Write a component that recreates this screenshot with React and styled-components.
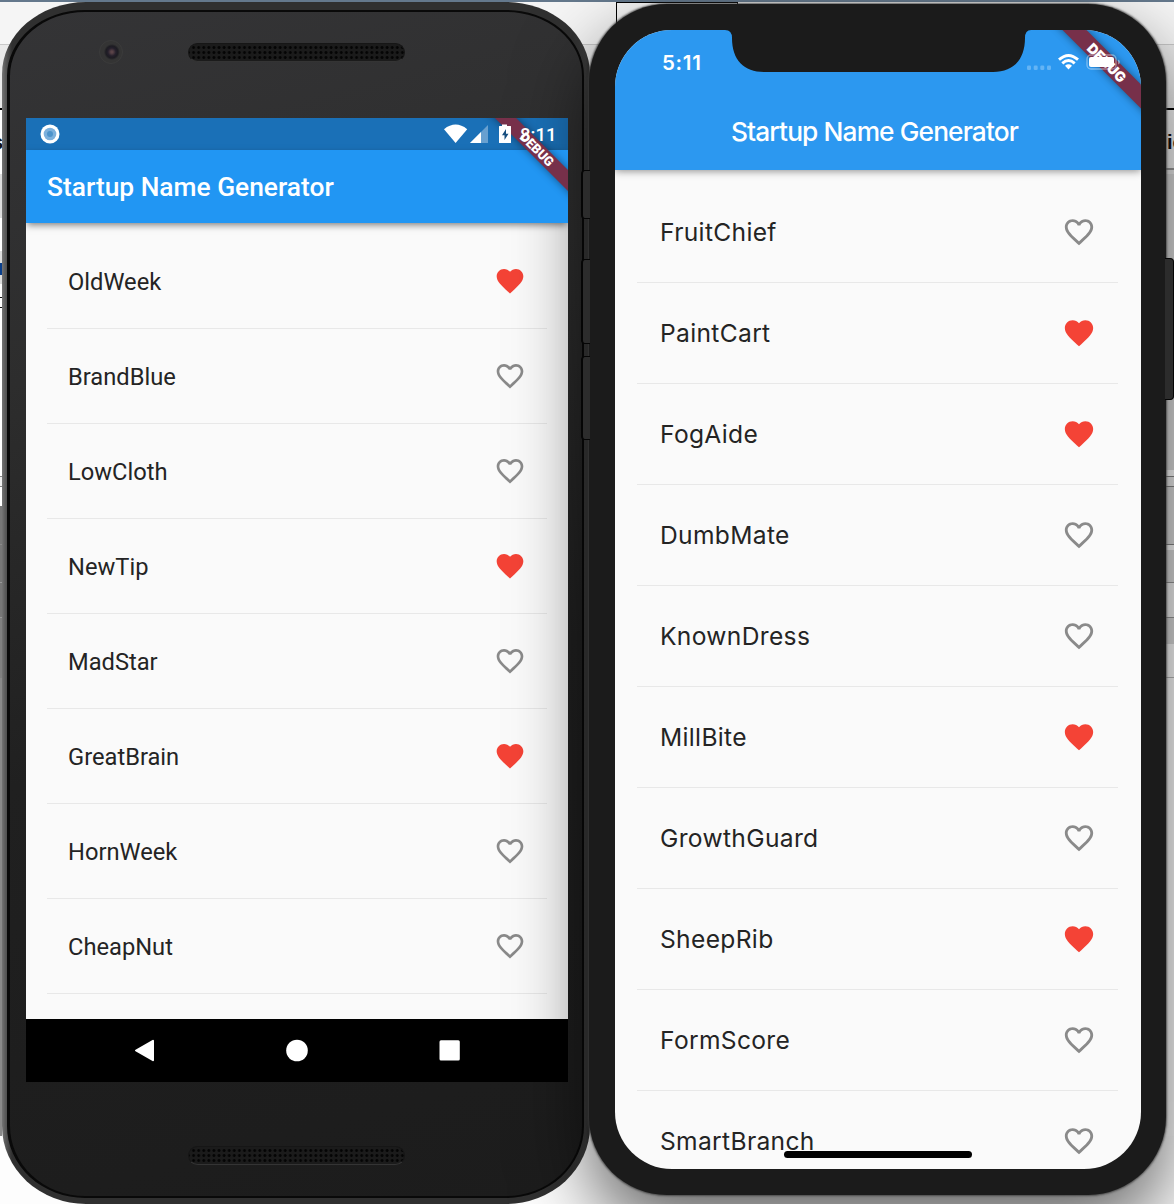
import React from "react";
import styled, { createGlobalStyle } from "styled-components";

const Global = createGlobalStyle`
  * { box-sizing: border-box; }
  body { margin: 0; overflow: hidden; background: #fff; }
`;

const Desktop = styled.div`
  position: relative;
  width: 1174px;
  height: 1204px;
  overflow: hidden;
  background: #fdfdfd;
`;

const Backdrop = styled.div`
  position: absolute;
  inset: 0;
  display: flex;
  flex-direction: column;
`;

const Strip = styled.div`
  flex: none;
  display: flex;
  justify-content: space-between;
  align-items: center;
  height: ${(p) => p.$h}px;
  background: ${(p) => (p.$edge ? `linear-gradient(90deg, ${p.$edge} 2px, ${p.$c} 2px)` : p.$c)};
`;

const WindowTab = styled.div`
  position: absolute;
  left: 616px;
  top: 2px;
  width: 122px;
  height: 42px;
  border: 1px solid #000;
`;

const Clipped = styled.span`
  width: 7px;
  overflow: hidden;
  display: flex;
  justify-content: ${(p) => (p.$end ? "flex-end" : "flex-start")};
  font: 700 20px "Liberation Sans", sans-serif;
  color: #111;
  padding-top: 6px;
  margin-left: ${(p) => (p.$end ? "-4px" : "0")};
`;

const Devices = styled.main`
  position: relative;
  display: flex;
  align-items: flex-start;
`;

/* Android handset */
const Nexus = styled.section`
  flex: none;
  width: 588px;
  height: 1202px;
  margin: 2px 0 0 2px;
  padding: 8px 6px 6px 5px;
  border-radius: 84px 84px 84px 84px / 72px 72px 78px 78px;
  background: linear-gradient(90deg, #747474 0, #5c5c5c 3px, #4a4a4a 6px, #303030 10px, #303030 570px, #3a3a3a 584px, #2c2c2c 588px);
`;

const NexusFace = styled.div`
  height: 100%;
  display: flex;
  flex-direction: column;
  align-items: center;
  border-radius: 78px 78px 78px 78px / 66px 66px 72px 72px;
  border: 2px solid #090909;
  border-left-width: 3px;
  background: linear-gradient(165deg, #343436 0%, #2d2d2d 28%, #202020 58%, #1c1c1c 100%);
`;

const NexusTop = styled.div`
  align-self: stretch;
  height: 106px;
  flex: none;
  display: flex;
  align-items: flex-start;
  padding: 27px 0 0 89px;
  gap: 65px;
`;

const Lens = styled.div`
  width: 24px;
  height: 24px;
  margin-top: 1px;
  border-radius: 50%;
  border: 1px solid #3b3b3b;
  background: radial-gradient(circle at 54% 50%, #5a4348 0 1px, #241f2b 4px, #1d1c22 6px, #343434 8px);
`;

const Grille = styled.div`
  width: 217px;
  height: 19px;
  margin-top: ${(p) => p.$mt}px;
  margin-left: ${(p) => p.$ml || 0}px;
  flex: none;
  border-radius: 10px;
  border: 1px solid #161616;
  border-bottom-color: #343434;
  background: radial-gradient(circle, #040404 0 1px, transparent 1.8px) 2px 1px / 5.1px 5px, #1b1b1b;
`;

const NexusScreen = styled.div`
  position: relative;
  flex: none;
  width: 542px;
  height: 964px;
  margin-left: 2px;
  overflow: hidden;
  display: flex;
  flex-direction: column;
  background: #fafafa;
  font-family: Roboto, sans-serif;
`;

const NexusStatus = styled.div`
  height: 32px;
  flex: none;
  display: flex;
  align-items: center;
  padding: 0 11px 0 14px;
  background: #1a70b7;
  color: #fff;
  font-size: 18.5px;
  font-weight: 500;
`;

const Signals = styled.svg`
  margin-left: auto;
  position: relative;
  z-index: 3;
`;

const NexusClock = styled.span`
  width: 37px;
  margin-left: 8px;
  position: relative;
  z-index: 3;
  padding-top: 1px;
  white-space: nowrap;
`;

const AppBar = styled.header`
  position: relative;
  z-index: 1;
  flex: none;
  display: flex;
  align-items: center;
  color: #fff;
  font-weight: 500;
  box-shadow: 0 1px 8px rgba(0, 0, 0, 0.45);
`;

const NexusBar = styled(AppBar)`
  height: 73px;
  padding-left: 21px;
  background: #2196f3;
  font-size: 26.35px;
  box-shadow: 0 3px 7px -1px rgba(0, 0, 0, 0.5);
`;

const List = styled.ul`
  flex: 1;
  min-height: 0;
  overflow: hidden;
  margin: 0;
  padding: ${(p) => p.$pad};
  list-style: none;
  color: #242424;
`;

const Row = styled.li`
  display: flex;
  align-items: center;
  justify-content: space-between;
  height: ${(p) => p.$h}px;
  padding: ${(p) => p.$pad};
  border-bottom: 1px solid #e8e8e8;
  font-size: ${(p) => p.$size}px;
  letter-spacing: ${(p) => p.$track || 0}px;
`;

const Name = styled.span`
  padding-top: ${(p) => p.$drop || 0}px;
`;

const NavBar = styled.nav`
  flex: none;
  height: 63px;
  display: flex;
  align-items: center;
  justify-content: center;
  background: #000;
`;

const Ribbon = styled.div`
  position: absolute;
  z-index: 2;
  top: ${(p) => p.$top}px;
  right: ${(p) => p.$right}px;
  width: 180px;
  height: ${(p) => p.$h}px;
  transform: rotate(45deg);
  display: flex;
  align-items: center;
  justify-content: center;
  background: #77304a;
  color: #fff;
  font-size: ${(p) => p.$size}px;
  font-weight: 900;
  box-shadow: 0 0 8px rgba(0, 0, 0, 0.45);
`;

const SideButton = styled.div`
  position: absolute;
  left: ${(p) => p.$x}px;
  top: ${(p) => p.$y}px;
  width: 9px;
  height: ${(p) => p.$h}px;
  border: 1px solid #050505;
  border-left-width: ${(p) => (p.$right ? 0 : 2)}px;
  border-right-width: ${(p) => (p.$right ? 1 : 0)}px;
  border-radius: ${(p) => (p.$right ? "0 4px 4px 0" : "4px 0 0 4px")};
  background: #2c2c2c;
`;

/* iPhone handset */
const IPhone = styled.section`
  position: relative;
  flex: none;
  width: 577px;
  height: 1191px;
  margin: 4px 0 0 -1px;
  padding: 26px 25px 26px 26px;
  border-radius: 78px;
  background: #1b1b1b;
  box-shadow: 0 0 2px 1px rgba(60, 60, 60, 0.8), 0 34px 74px rgba(0, 0, 0, 0.6);
`;

const IScreen = styled.div`
  position: relative;
  width: 526px;
  height: 1139px;
  border-radius: 57px;
  overflow: hidden;
  display: flex;
  flex-direction: column;
  background: #fafafa;
  font-family: Inter, sans-serif;
`;

const IHeader = styled(AppBar)`
  height: 140px;
  flex-direction: column;
  background: #2c98f0;
`;

const IStatus = styled.div`
  align-self: stretch;
  display: flex;
  align-items: center;
  justify-content: space-between;
  height: 62px;
  padding: 3px 20px 0 47px;
  font-size: 20.5px;
  font-weight: 600;
  letter-spacing: 0.7px;
`;

const ITitle = styled.div`
  height: 78px;
  display: flex;
  align-items: center;
  padding-right: 7px;
  font-size: 26.3px;
  letter-spacing: -0.88px;
`;

const Overlay = styled.svg`
  position: absolute;
  z-index: 3;
  left: ${(p) => p.$x}px;
  top: ${(p) => p.$y}px;
`;

const HomeBar = styled.div`
  position: absolute;
  z-index: 3;
  left: 169px;
  bottom: 11px;
  width: 188px;
  height: 7px;
  border-radius: 4px;
  background: #000;
`;

const FILLED =
  "M12 21.35l-1.45-1.32C5.4 15.36 2 12.28 2 8.5 2 5.42 4.42 3 7.5 3c1.74 0 3.41.81 4.5 2.09C13.09 3.81 14.76 3 16.5 3 19.58 3 22 5.42 22 8.5c0 3.78-3.4 6.86-8.55 11.54L12 21.35z";
const OUTLINE =
  "M16.5 3c-1.74 0-3.41.81-4.5 2.09C10.91 3.81 9.24 3 7.5 3 4.42 3 2 5.42 2 8.5c0 3.78 3.4 6.86 8.55 11.54L12 21.35l1.45-1.32C18.6 15.36 22 12.28 22 8.5 22 5.42 19.58 3 16.5 3zm-4.4 15.55l-.1.1-.1-.1C7.14 14.24 4 11.39 4 8.5 4 6.5 5.5 5 7.5 5c1.54 0 3.04.99 3.57 2.36h1.87C13.46 5.99 14.96 5 16.5 5c2 0 3.5 1.5 3.5 3.5 0 2.89-3.14 5.74-7.9 10.05z";

function Heart({ on, size }) {
  return (
    <svg width={size} height={size} viewBox="0 0 24 24">
      <path d={on ? FILLED : OUTLINE} fill={on ? "#f44336" : "#8a8a8a"} />
    </svg>
  );
}

const androidNames = [
  ["OldWeek", true],
  ["BrandBlue", false],
  ["LowCloth", false],
  ["NewTip", true],
  ["MadStar", false],
  ["GreatBrain", true],
  ["HornWeek", false],
  ["CheapNut", false],
];

const iosNames = [
  ["FruitChief", false],
  ["PaintCart", true],
  ["FogAide", true],
  ["DumbMate", false],
  ["KnownDress", false],
  ["MillBite", true],
  ["GrowthGuard", false],
  ["SheepRib", true],
  ["FormScore", false],
  ["SmartBranch", false],
];

/* height, colour, left edge colour */
const strips = [
  [2, "#64788c"],
  [42, "#f5f5f5"],
  [1, "#c8c8c8"],
  [63, "#e9e9e9"],
  [2, "#000"],
  [58, "#f4f4f4", "#fff"],
  [2, "#999", "#fff"],
  [4, "#eee", "#fff"],
  [44, "#ddd"],
  [33, "#ddd", "#fff"],
  [12, "#ddd"],
  [12, "#ddd", "#0a3f8c"],
  [9, "#ddd"],
  [13, "#ddd", "#fff"],
  [1, "#ddd", "#111"],
  [9, "#ddd", "#fff"],
  [1, "#ddd", "#111"],
  [162, "#ddd", "#fff"],
  [6, "#fff"],
  [1, "#888"],
  [9, "#eee"],
  [1, "#888"],
  [19, "#ddd", "#fff"],
  [38, "#ddd", "#777"],
  [1, "#888"],
  [5, "#fff", "#777"],
  [32, "#ddd", "#777"],
  [1, "#999"],
  [34, "#f5f5f5", "#777"],
  [1, "#999"],
  [26, "#ddd", "#808080"],
  [33, "#fff", "#808080"],
  [1, "#bbb", "#808080"],
  [458, "#fff", "#8a8a8a"],
];

function Android() {
  return (
    <Nexus>
      <NexusFace>
        <NexusTop>
          <Lens />
          <Grille $mt={4} />
        </NexusTop>
        <NexusScreen>
          <NexusStatus>
            <svg width="20" height="20" viewBox="0 0 20 20">
              <circle cx="10" cy="10" r="9.5" fill="#fff" />
              <circle cx="10" cy="10" r="6.3" fill="#7cb0dc" />
              <circle cx="10" cy="10" r="3" fill="#4c93cb" />
            </svg>
            <Signals width="68" height="20" viewBox="0 0 68 20">
              <path d="M0 5.2Q11.600-4 23.200 5.200L11.600 19z" fill="#fff" />
              <path d="M26 19L44 1v18z" fill="#68a0d0" />
              <path d="M26 19L37 8v11z" fill="#fff" />
              <path d="M58 .5h5V2h3.500q.5 0 .5.500v16q0 .5-.5.500h-11q-.5 0-.5-.5v-16q0-.5.5-.5H58z" fill="#fff" />
              <path d="M62 5l-4 6.200h2.500V16l4-6.200H62z" fill="#174f80" />
            </Signals>
            <NexusClock>8:11</NexusClock>
          </NexusStatus>
          <NexusBar>Startup Name Generator</NexusBar>
          <List $pad="11px 21px 0">
            {androidNames.map(([name, on]) => (
              <Row key={name} $h={95} $pad="0 21px" $size={23.7}>
                <Name $drop={1}>{name}</Name>
                <Heart on={on} size={32} />
              </Row>
            ))}
          </List>
          <NavBar>
            <svg width="542" height="63" viewBox="0 0 542 63">
              <path d="M110 31.500L127 21.800V41.200z" fill="#fff" stroke="#fff" strokeWidth="2" strokeLinejoin="round" />
              <circle cx="271" cy="31.500" r="10.800" fill="#fff" />
              <rect x="413.500" y="21.200" width="20.300" height="20.300" rx="1.500" fill="#fff" />
            </svg>
          </NavBar>
          <Ribbon $top={24} $right={-59} $h={15} $size={13}>
            DEBUG
          </Ribbon>
        </NexusScreen>
        <Grille $mt={64} $ml={1} />
      </NexusFace>
    </Nexus>
  );
}

function Ios() {
  return (
    <IPhone>
      <IScreen>
        <IHeader>
          <IStatus>5:11</IStatus>
          <ITitle>Startup Name Generator</ITitle>
        </IHeader>
        <List $pad="12px 23px 0 22px">
          {iosNames.map(([name, on]) => (
            <Row key={name} $h={101} $pad="0 22px 0 23px" $size={24.6} $track={0.33}>
              <Name>{name}</Name>
              <Heart on={on} size={34} />
            </Row>
          ))}
        </List>
        <Ribbon $top={24} $right={-56} $h={17} $size={14}>
          DEBUG
        </Ribbon>
        <Overlay $x={110} $y={0} width="306" height="43" viewBox="0 0 306 43">
          <path d="M0 0Q7 0 7 8C7 30 19 42 39 42H268C288 42 300 30 300 8Q300 0 306 0z" fill="#1b1b1b" />
        </Overlay>
        <Overlay $x={411} $y={23} width="96" height="18" viewBox="0 0 96 18">
          <g fill="#64b4f5">
            <rect x="1" y="12.500" width="4" height="4.500" rx="1.300" />
            <rect x="7.700" y="12.500" width="4" height="4.500" rx="1.300" />
            <rect x="14.300" y="12.500" width="4" height="4.500" rx="1.300" />
            <rect x="21" y="12.500" width="4" height="4.500" rx="1.300" />
          </g>
          <g fill="none" stroke="#fff" strokeWidth="2.900">
            <path d="M33 6.700Q42.500-1.800 52 6.700" />
            <path d="M36.300 10.400Q42.500 4.800 48.700 10.400" />
          </g>
          <path d="M39 12.700Q42.500 9.800 46 12.700L42.500 16.500z" fill="#fff" />
          <rect x="61" y="2" width="29" height="14" rx="4" fill="none" stroke="#fff" strokeOpacity=".4" strokeWidth="1.300" />
          <rect x="63" y="4" width="25" height="10" rx="2" fill="#fff" />
          <path d="M92 6.500q2 .5 2 2.500t-2 2.500z" fill="#fff" fillOpacity=".4" />
        </Overlay>
        <HomeBar />
      </IScreen>
    </IPhone>
  );
}

export default function App() {
  return (
    <Desktop>
      <Global />
      <Backdrop>
        {strips.map(([h, c, edge], i) => (
          <Strip key={i} $h={h} $c={c} $edge={edge}>
            {h === 58 && (
              <>
                <Clipped $end>s</Clipped>
                <Clipped>ic</Clipped>
              </>
            )}
          </Strip>
        ))}
        <WindowTab />
      </Backdrop>
      <Devices>
        <Android />
        <Ios />
      </Devices>
      <SideButton $x={581} $y={170} $h={49} />
      <SideButton $x={581} $y={259} $h={85} />
      <SideButton $x={581} $y={356} $h={84} />
      <SideButton $right $x={1165} $y={258} $h={142} />
    </Desktop>
  );
}
